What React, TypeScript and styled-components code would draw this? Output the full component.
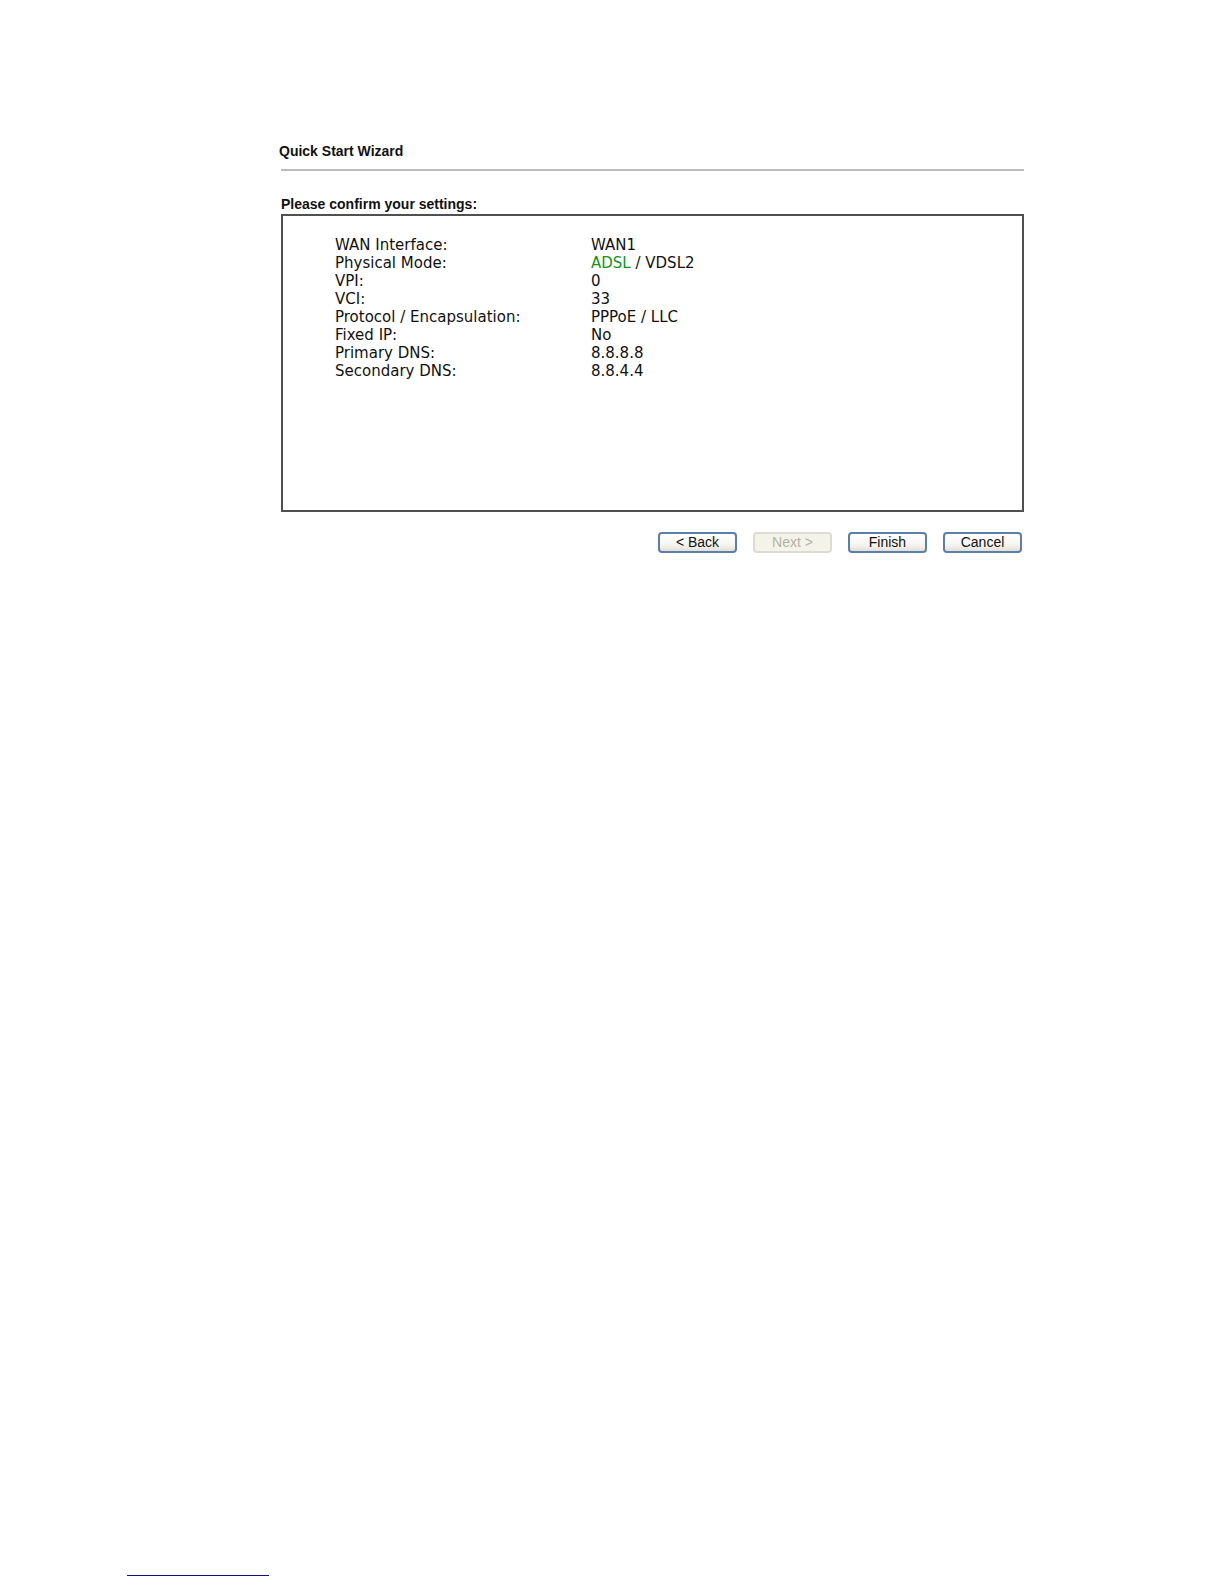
import React from "react";
import styled, { createGlobalStyle } from "styled-components";

const GlobalStyle = createGlobalStyle`
  body {
    margin: 0;
    background: #ffffff;
    color: #111111;
    font-family: "Liberation Sans", Arial, sans-serif;
  }
`;

const Page = styled.div`
  display: flex;
  flex-direction: column;
  justify-content: space-between;
  box-sizing: border-box;
  min-height: 100vh;
  padding: 142px 200px 8px 127px;
`;

const Wizard = styled.main`
  margin-left: 154px;
`;

const Title = styled.h1`
  margin: 0 0 0 -2px;
  padding-bottom: 8px;
  font-size: 14px;
  line-height: 19px;
`;

const Divider = styled.hr`
  height: 2px;
  margin: 0;
  border: 0;
  background: #bcbcbc;
`;

const Subtitle = styled.h2`
  margin: 24px 0 0;
  font-size: 14px;
  line-height: 19px;
`;

const Panel = styled.section`
  box-sizing: border-box;
  min-height: 298px;
  padding: 20px 52px;
  border: 2px solid #505050;
`;

const Settings = styled.table`
  border-collapse: collapse;
  font-family: Verdana, "DejaVu Sans", sans-serif;
  font-size: 15px;
  line-height: 18px;
`;

const Name = styled.th`
  width: 256px;
  padding: 0;
  font-weight: normal;
  text-align: left;
`;

const Value = styled.td`
  padding: 0;
`;

const Active = styled.span`
  color: #159415;
`;

const Actions = styled.div`
  display: flex;
  justify-content: flex-end;
  gap: 16px;
  padding: 20px 2px 0 0;
`;

const Button = styled.button`
  box-sizing: border-box;
  width: 79px;
  height: 21px;
  padding: 0;
  border: 2px solid #5a80aa;
  border-radius: 4px;
  background: linear-gradient(#ffffff, #f5f5f0 65%, #e2dfd6);
  color: #111111;
  font-family: "Liberation Sans", Arial, sans-serif;
  font-size: 14px;
  line-height: 17px;

  &:disabled {
    border-color: #dcdccf;
    background: #f4f3e9;
    color: #b3b3a4;
  }
`;

const FootRule = styled.hr`
  width: 142px;
  height: 1px;
  margin: 0;
  border: 0;
  background: #10108c;
`;

const settings: { name: string; value: React.ReactNode }[] = [
  { name: "WAN Interface:", value: "WAN1" },
  { name: "Physical Mode:", value: <><Active>ADSL</Active> / VDSL2</> },
  { name: "VPI:", value: "0" },
  { name: "VCI:", value: "33" },
  { name: "Protocol / Encapsulation:", value: "PPPoE / LLC" },
  { name: "Fixed IP:", value: "No" },
  { name: "Primary DNS:", value: "8.8.8.8" },
  { name: "Secondary DNS:", value: "8.8.4.4" },
];

export default function App() {
  return (
    <>
      <GlobalStyle />
      <Page>
        <Wizard>
          <Title>Quick Start Wizard</Title>
          <Divider />
          <Subtitle>Please confirm your settings:</Subtitle>
          <Panel>
            <Settings>
              <tbody>
                {settings.map((row) => (
                  <tr key={row.name}>
                    <Name scope="row">{row.name}</Name>
                    <Value>{row.value}</Value>
                  </tr>
                ))}
              </tbody>
            </Settings>
          </Panel>
          <Actions>
            <Button type="button">&lt; Back</Button>
            <Button type="button" disabled>Next &gt;</Button>
            <Button type="button">Finish</Button>
            <Button type="button">Cancel</Button>
          </Actions>
        </Wizard>
        <FootRule />
      </Page>
    </>
  );
}
